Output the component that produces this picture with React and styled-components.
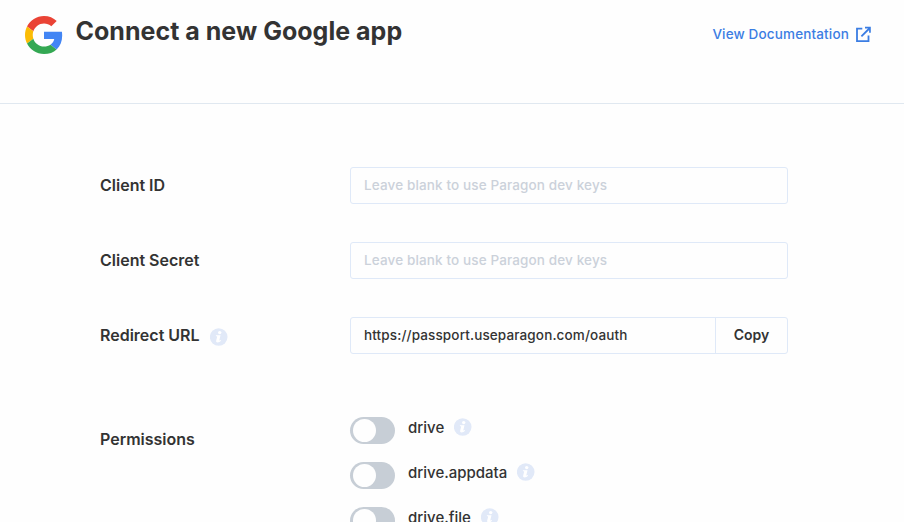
import React from 'react';
import styled, { createGlobalStyle } from 'styled-components';

const Global = createGlobalStyle`
  * { box-sizing: border-box; }
  html, body { margin: 0; height: 522px; overflow: hidden; background: #fefefe; }
  body, input, button { font-family: Inter, "Liberation Sans", sans-serif; }
`;
const Page = styled.main`
  width: 904px;
  height: 522px;
  overflow: hidden;
  color: #333;
`;
const Header = styled.header`
  display: flex;
  align-items: flex-start;
  height: 104px;
  padding: 16px 32px 0 25px;
  border-bottom: 1px solid #e0e8f0;
`;
const Title = styled.h1`
  margin: -1px auto 0 12.5px;
  font-size: 25px;
  line-height: 32px;
  font-weight: 700;
  letter-spacing: 0.02px;
  white-space: nowrap;
`;
const DocLink = styled.a`
  display: flex;
  align-items: center;
  gap: 6px;
  height: 20px;
  margin-top: 8px;
  color: #3b7de3;
  font-size: 13.5px;
  letter-spacing: 0.15px;
  font-weight: 500;
  white-space: nowrap;
`;
const LinkText = styled.span`
  padding-bottom: 1px;
`;
const Form = styled.form`
  padding: 63px 0 0 100px;
`;
const Row = styled.div`
  display: grid;
  grid-template-columns: 250px 438px;
  height: 75px;
`;
const Label = styled.label`
  display: flex;
  align-items: center;
  gap: 10px;
  height: 37px;
  font-size: 16px;
  font-weight: 600;
  white-space: nowrap;
`;
const LabelText = styled.span`
  padding-bottom: 2px;
`;
const Field = styled.div`
  display: flex;
  height: 37px;
  border: 1px solid #dfe9f8;
  border-radius: 3px;
`;
const Input = styled.input`
  flex: 1;
  min-width: 0;
  padding: 0 13px 1px;
  border: 0;
  outline: 0;
  background: transparent;
  color: #333;
  font-size: 13.5px;
  letter-spacing: 0.13px;
  font-weight: 500;
  &::placeholder { color: #cbd1da; opacity: 1; }
`;
const CopyButton = styled.button`
  width: 72px;
  padding: 0 0 2px;
  border: 0;
  border-left: 1px solid #dfe9f8;
  background: transparent;
  color: #333;
  font-size: 14px;
  font-weight: 600;
`;
const Permissions = styled.div`
  display: grid;
  grid-template-columns: 250px 438px;
  padding-top: 25px;
`;
const PermissionLabel = styled(Label)`
  margin-top: 4px;
`;
const Permission = styled.div`
  display: flex;
  align-items: flex-start;
  height: 45px;
`;
const Toggle = styled.span`
  width: 45px;
  height: 27px;
  padding: 2px 2.5px;
  border-radius: 14px;
  background: #c7ced6;
  &::after {
    content: "";
    display: block;
    width: 23px;
    height: 23px;
    border-radius: 50%;
    background: #fefefe;
  }
`;
const PermissionName = styled.span`
  margin: 0 10px 0 13px;
  font-size: 15px;
  line-height: 22px;
  font-weight: 500;
`;
const InfoSvg = styled.svg`
  flex: none;
  margin-top: ${({ $offset }) => $offset}px;
`;

function Info({ offset = 1 }) {
  return (
    <InfoSvg width="18" height="18" viewBox="0 0 18 18" $offset={offset}>
      <circle cx="8.7" cy="9" r="8.8" fill="#e1e9f8" />
      <circle cx="9.7" cy="4.6" r="1.7" fill="#fff" />
      <path d="M6 7.3h4.5L9.3 12.2c-.1.5.4.4 1.3-.1l.4.7c-1.1 1.1-2.2 1.6-3.3 1.6-1.3 0-1.8-.7-1.5-1.9l1-4-1.4-.4z" fill="#fff" />
    </InfoSvg>
  );
}
function GoogleLogo() {
  return (
    <svg width="38" height="38" viewBox="0 0 48 48">
      <path fill="#EA4335" d="M24 9.5c3.54 0 6.71 1.22 9.21 3.6l6.85-6.85C35.9 2.38 30.47 0 24 0 14.62 0 6.51 5.38 2.56 13.22l7.98 6.19C12.43 13.72 17.74 9.5 24 9.5z" />
      <path fill="#4285F4" d="M46.98 24.55c0-1.57-.15-3.09-.38-4.55H24v9.02h12.94c-.58 2.96-2.26 5.48-4.78 7.18l7.73 6c4.51-4.18 7.09-10.36 7.09-17.65z" />
      <path fill="#FBBC05" d="M10.53 28.59c-.48-1.45-.76-2.99-.76-4.59s.27-3.14.76-4.59l-7.98-6.19C.92 16.46 0 20.12 0 24c0 3.88.92 7.54 2.56 10.78l7.97-6.19z" />
      <path fill="#34A853" d="M24 48c6.48 0 11.93-2.13 15.89-5.81l-7.73-6c-2.15 1.45-4.92 2.3-8.16 2.3-6.26 0-11.57-4.22-13.47-9.91l-7.98 6.19C6.51 42.62 14.62 48 24 48z" />
    </svg>
  );
}

export default function App() {
  return (
    <Page>
      <Global />
      <Header>
        <GoogleLogo />
        <Title>Connect a new Google app</Title>
        <DocLink>
          <LinkText>View Documentation</LinkText>
          <svg width="17" height="17" viewBox="0 0 17 17" fill="none" stroke="currentColor" strokeWidth="1.8">
            <path d="M7.3 2.7H2v12.4h11.5V9.5M13.8 3L6.4 10.3" />
            <path d="M10 .8h5.8v6h-1.7V3.9l-1.4-1.5H10z" fill="currentColor" stroke="none" />
          </svg>
        </DocLink>
      </Header>
      <Form>
        <Row>
          <Label><LabelText>Client ID</LabelText></Label>
          <Field><Input placeholder="Leave blank to use Paragon dev keys" /></Field>
        </Row>
        <Row>
          <Label><LabelText>Client Secret</LabelText></Label>
          <Field><Input placeholder="Leave blank to use Paragon dev keys" /></Field>
        </Row>
        <Row>
          <Label><LabelText>Redirect URL</LabelText><Info offset={2} /></Label>
          <Field>
            <Input readOnly value="https://passport.useparagon.com/oauth" />
            <CopyButton type="button">Copy</CopyButton>
          </Field>
        </Row>
        <Permissions>
          <PermissionLabel><LabelText>Permissions</LabelText></PermissionLabel>
          <div>
            {['drive', 'drive.appdata', 'drive.file'].map((name) => (
              <Permission key={name}>
                <Toggle />
                <PermissionName>{name}</PermissionName>
                <Info />
              </Permission>
            ))}
          </div>
        </Permissions>
      </Form>
    </Page>
  );
}
